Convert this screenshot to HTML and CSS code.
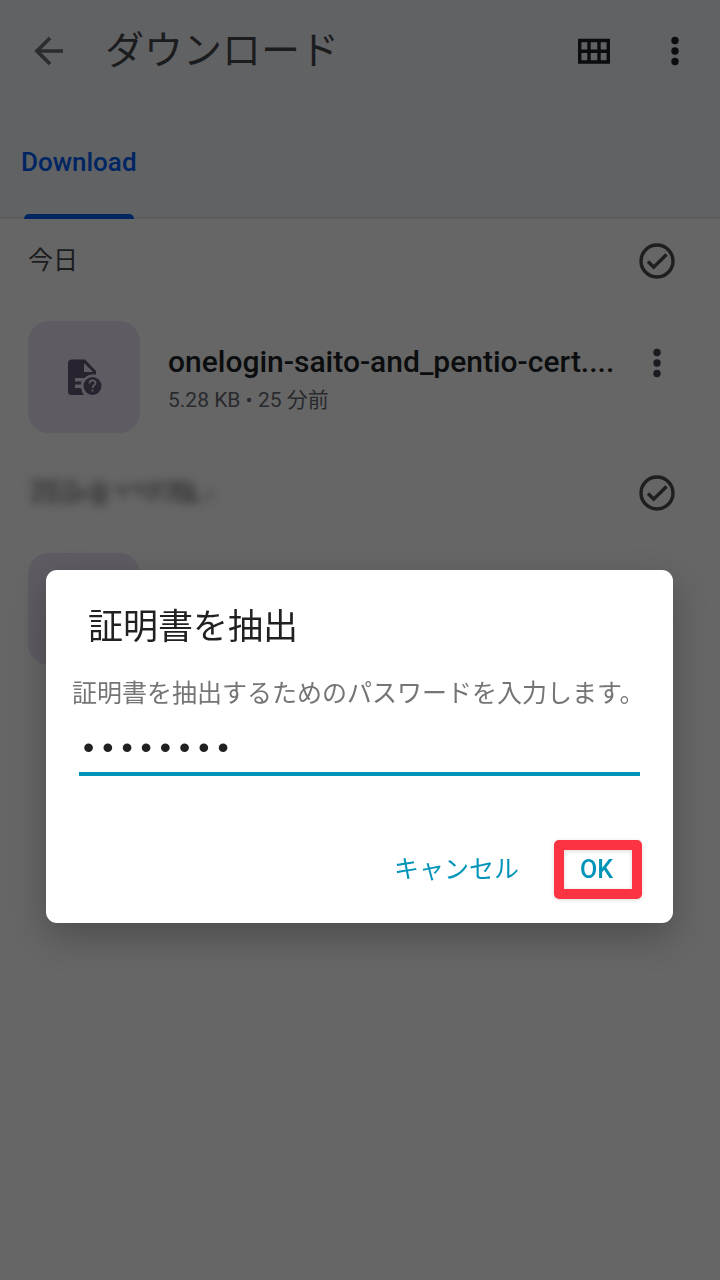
FILE: index.html
```html
<!DOCTYPE html>
<html lang="ja">
<head>
<meta charset="utf-8">
<meta name="viewport" content="width=device-width, initial-scale=1">
<title>ダウンロード</title>
<link rel="stylesheet" href="styles.css">
</head>
<body>
<header class="header">
  <div class="appbar">
    <button class="icon-button" type="button" aria-label="戻る">
      <svg width="30" height="30" viewBox="0 0 30 30" fill="none" stroke="currentColor" stroke-width="3.700"><path d="M29 15H4M16 2 3 15l13 13"/></svg>
    </button>
    <h1 class="appbar-title">ダウンロード</h1>
    <button class="icon-button icon-dark" type="button" aria-label="グリッド表示">
      <svg width="32" height="26" viewBox="0 0 32 26" fill="none" stroke="currentColor" stroke-width="3.400"><path d="M1.700 2.500h28.600v21.500H1.700zM11 2.500V24M21 2.500V24M1.700 13.200h28.600"/></svg>
    </button>
    <button class="icon-button icon-dark" type="button" aria-label="その他">
      <svg width="8" height="30" viewBox="0 0 8 30" fill="currentColor"><circle cx="4" cy="4.500" r="3.700"/><circle cx="4" cy="15" r="3.700"/><circle cx="4" cy="25.500" r="3.700"/></svg>
    </button>
  </div>
  <nav class="tabs"><a class="tab" href="#download">Download</a></nav>
</header>

<main id="download">
  <div class="section">
    <h2 class="section-title">今日</h2>
    <button class="icon-button" type="button" aria-label="すべて選択">
      <svg width="36" height="36" viewBox="0 0 36 36" fill="none" stroke="currentColor" stroke-width="3.400"><circle cx="18" cy="18" r="16"/><path d="m9 18.500 5.700 5.700L27.500 11.500"/></svg>
    </button>
  </div>
  <div class="file">
    <div class="thumb">
      <svg width="36" height="36" viewBox="0 0 36 36"><path fill="#27232f" d="M6 .5h13L30 12v3.500h-2A11.500 11.500 0 0 0 18.500 19H9v3.500h6.500l-.8 3H9V29h6q.5 4 3 7H5.500Q2 36 2 32.500V4Q2 .5 6 .500z"/><path fill="#5e5b62" d="M18 4v9h9z"/><circle cx="26.500" cy="27" r="11" fill="#5e5b62"/><circle cx="26.500" cy="27" r="9" fill="#27232f"/><path d="M23.500 24.500c0-4 6-4 6-.5 0 2-3 2.500-3 5m0 1.500v2" fill="none" stroke="#5e5b62" stroke-width="1.800"/></svg>
    </div>
    <div class="file-info">
      <div class="file-name">onelogin-saito-and_pentio-cert....</div>
      <div class="file-meta">5.28 KB • 25 分前</div>
    </div>
    <button class="icon-button icon-file" type="button" aria-label="その他の操作">
      <svg width="8" height="30" viewBox="0 0 8 30" fill="currentColor"><circle cx="4" cy="4.500" r="3.700"/><circle cx="4" cy="15" r="3.700"/><circle cx="4" cy="25.500" r="3.700"/></svg>
    </button>
  </div>
  <div class="section">
    <svg class="redacted" width="190" height="30" viewBox="0 0 190 30" fill="none" stroke="#424242" stroke-width="5"><path d="M2 5h12l-8 17h8M20 5v17h9V5zM36 5h9l-8 17h12M52 9v14M47 16h14M66 5v20M64 7h15M64 16h15M64 24h15M76 5v20"/><path d="M86 11h10v8M101 9h12v10M118 7h12v8h-7v9M134 6h12v7l-10 10M150 6h9v16h-9zM164 7v15h9"/><path stroke-width="3" d="M178 22l7-9"/></svg>
    <button class="icon-button" type="button" aria-label="すべて選択">
      <svg width="36" height="36" viewBox="0 0 36 36" fill="none" stroke="currentColor" stroke-width="3.400"><circle cx="18" cy="18" r="16"/><path d="m9 18.500 5.700 5.700L27.500 11.500"/></svg>
    </button>
  </div>
  <div class="file"><div class="thumb"></div></div>
</main>

<div class="overlay">
  <form class="dialog" role="dialog" aria-modal="true" aria-labelledby="dialog-title">
    <h2 class="dialog-title" id="dialog-title">証明書を抽出</h2>
    <label class="dialog-message" for="password">証明書を抽出するためのパスワードを入力します。</label>
    <input class="password" id="password" type="password" value="password">
    <div class="actions">
      <button class="action" type="button">キャンセル</button>
      <button class="action action-ok" type="button">OK</button>
    </div>
  </form>
</div>
</body>
</html>
```
FILE: styles.css
```css
* { box-sizing: border-box; }

body {
  margin: 0;
  min-height: 100vh;
  background: #666;
  color: #1b1c1e;
  font-family: Roboto, "Noto Sans CJK JP", sans-serif;
}

h1, h2 { margin: 0; font-weight: 400; }

button { padding: 0; border: 0; background: none; font: inherit; }

.icon-button {
  display: flex;
  align-items: center;
  justify-content: center;
  flex: none;
  width: 36px;
  height: 48px;
  color: #1d1f1f;
}
.icon-button svg { display: block; }
.icon-dark { color: #0c0d0e; }
.icon-file { color: #1c1b21; margin-bottom: 28px; }

.header { background: #616264; border-bottom: 2px solid #5b5c5f; }

.appbar {
  display: flex;
  align-items: center;
  height: 102px;
  padding: 0 27px 0 31px;
}
.appbar .icon-button:first-child { color: #2b2c2e; }
.appbar-title { flex: 1; margin-left: 38px; font-size: 39px; line-height: 58px; }
.appbar .icon-dark + .icon-dark { margin-left: 45px; }

.tabs { display: flex; height: 115px; padding: 0 21px; }
.tab {
  position: relative;
  display: flex;
  align-items: center;
  height: 117px;
  padding-top: 2px;
  color: #002563;
  font-size: 26px;
  font-weight: 500;
  text-decoration: none;
}
.tab::after {
  content: "";
  position: absolute;
  left: 3px;
  right: 3px;
  bottom: 0;
  height: 5px;
  border-radius: 5px 5px 0 0;
  background: #002563;
}

.section {
  display: flex;
  align-items: center;
  justify-content: space-between;
  height: 84px;
  padding: 0 45px 0 28px;
}
.section-title { font-size: 25px; line-height: 36px; }
.redacted { filter: blur(5px); }

.file {
  display: flex;
  align-items: center;
  padding: 18px 45px 18px 28px;
}
.thumb {
  display: flex;
  align-items: center;
  justify-content: center;
  flex: none;
  width: 112px;
  height: 112px;
  border-radius: 21px;
  background: #5e5b62;
}
.file-info { flex: 1; min-width: 0; margin-left: 28px; padding-top: 5px; }
.file-name {
  color: #0c0d0e;
  font-size: 30px;
  font-weight: 500;
  line-height: 40px;
  white-space: nowrap;
}
.file-meta { color: #292a2d; font-size: 21px; line-height: 36px; }

.overlay {
  position: fixed;
  inset: 0;
  display: flex;
  align-items: center;
  padding: 213px 47px 0 46px;
}
.dialog {
  display: flex;
  flex-direction: column;
  width: 100%;
  padding: 32px 26px 24px;
  border-radius: 11px;
  background: #fff;
  box-shadow: 0 14px 36px rgba(0, 0, 0, .24);
}
.dialog-title { margin-left: 16px; color: #212121; font-size: 35px; line-height: 52px; }
.dialog-message { margin-top: 20px; color: #757575; font-size: 25px; line-height: 40px; }
.password {
  height: 62px;
  margin: 0 7px;
  padding: 12px 0 0;
  border: 0;
  border-bottom: 4px solid #0095b8;
  outline: 0;
  background: none;
  color: #212121;
  font-family: "Liberation Mono", monospace;
  font-size: 32px;
}
.actions {
  display: flex;
  align-items: center;
  justify-content: flex-end;
  margin: 64px 5px 0 0;
}
.action { color: #0095b8; font-size: 25px; line-height: 36px; }
.action-ok {
  width: 88px;
  height: 59px;
  margin-left: 35px;
  padding-right: 3px;
  border: 10px solid #fb3342;
  border-radius: 5px;
  font-weight: 500;
  box-shadow: 0 1px 4px rgba(0, 0, 0, .15), inset 0 1px 4px rgba(0, 0, 0, .15);
}
```
